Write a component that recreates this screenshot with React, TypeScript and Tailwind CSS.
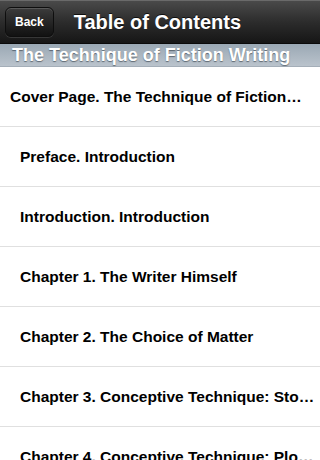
const rows = [
  { label: "Cover Page. The Technique of Fiction…", indent: false },
  { label: "Preface. Introduction", indent: true },
  { label: "Introduction. Introduction", indent: true },
  { label: "Chapter 1. The Writer Himself", indent: true },
  { label: "Chapter 2. The Choice of Matter", indent: true },
  { label: "Chapter 3. Conceptive Technique: Sto…", indent: true },
  { label: "Chapter 4. Conceptive Technique: Plo…", indent: true },
];

export default function App() {
  return (
    <div className="w-[320px] h-[460px] overflow-hidden bg-white font-['Liberation_Sans',Arial,sans-serif]">
      {/* Nav bar */}
      <div className="h-[44px] flex items-center border-t border-[#6a6a6a] bg-gradient-to-b from-[#4a4a4a] via-[#2c2c2c] to-[#161616] border-b border-b-[#0a0a0a]">
        <button className="ml-[5px] h-[30px] px-[9px] rounded-[6px] border border-[#0e0e0e] bg-gradient-to-b from-[#3c3c3c] to-[#121212] text-white text-[12px] font-bold shadow-[inset_0_1px_0_rgba(255,255,255,0.15),0_1px_0_rgba(255,255,255,0.12)]">
          Back
        </button>
        <h1 className="ml-[20px] text-white text-[20px] font-bold [text-shadow:0_-1px_0_rgba(0,0,0,0.7)]">
          Table of Contents
        </h1>
      </div>

      {/* Section header */}
      <div className="h-[23px] flex items-center px-[12px] bg-gradient-to-b from-[#9aa8b4] to-[#bac3cc] border-b border-[#a4aeb8]">
        <span className="text-white text-[18px] font-bold leading-none [text-shadow:0_1px_1px_rgba(60,70,80,0.7)]">
          The Technique of Fiction Writing
        </span>
      </div>

      {/* Rows */}
      <ul>
        {rows.map((r) => (
          <li
            key={r.label}
            className={`h-[60px] flex items-center border-b border-[#e0e0e0] ${r.indent ? "pl-[20px]" : "pl-[10px]"}`}
          >
            <span className="whitespace-nowrap text-[15.5px] font-bold text-black">{r.label}</span>
          </li>
        ))}
      </ul>
    </div>
  );
}
